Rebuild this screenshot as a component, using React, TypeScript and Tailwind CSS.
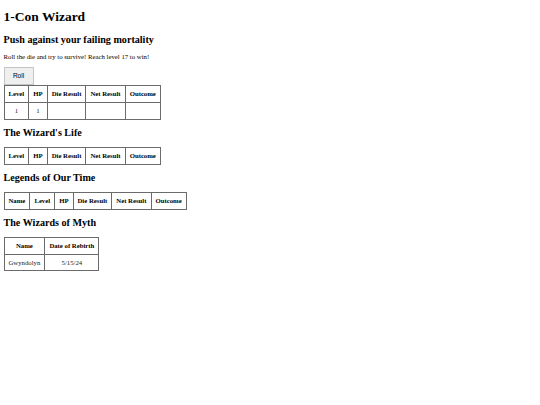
const serif = "font-['Liberation_Serif','Times_New_Roman',serif]";

const th = "border border-[#6b6b6b] px-[4px] py-[4px] text-[6.75px] leading-[8px] font-bold text-black whitespace-nowrap";
const td = "border border-[#6b6b6b] px-[4px] py-[4px] text-[6.75px] leading-[7.5px] text-center text-[#222] whitespace-nowrap";

function Table({ headers, rows }: { headers: string[]; rows: string[][] }) {
  return (
    <table className="border-collapse">
      <thead>
        <tr>
          {headers.map((h) => (
            <th key={h} className={th}>
              {h}
            </th>
          ))}
        </tr>
      </thead>
      <tbody>
        {rows.map((r, i) => (
          <tr key={i}>
            {r.map((c, j) => (
              <td key={j} className={td}>
                {c}
              </td>
            ))}
          </tr>
        ))}
      </tbody>
    </table>
  );
}

const h2 = "text-[10.125px] leading-[11.5px] font-bold my-[7.75px] text-black";

export default function App() {
  const cols = ["Level", "HP", "Die Result", "Net Result", "Outcome"];

  return (
    <div className={`${serif} min-h-[405px] w-[540px] bg-white px-[3.5px] pt-px text-black`}>
      <h1 className="mb-[9px] mt-[8px] text-[13.5px] font-bold leading-[15.5px]">1-Con Wizard</h1>
      <h2 className={h2}>Push against your failing mortality</h2>
      <p className="my-[6.5px] text-[6.75px] leading-[7.8px]">
        Roll the die and try to survive! Reach level 17 to win!
      </p>
      <div className="flex">
        <button className="h-[18px] w-[30px] border border-[#c4c4c4] bg-[#efefef] font-['Liberation_Sans',Arial,sans-serif] text-[6.5px] leading-none text-black">
          Roll
        </button>
      </div>
      <Table headers={cols} rows={[["1", "1", "", "", ""]]} />

      <h2 className={h2}>The Wizard's Life</h2>
      <Table headers={cols} rows={[]} />

      <h2 className={h2}>Legends of Our Time</h2>
      <Table headers={["Name", ...cols]} rows={[]} />

      <h2 className={h2}>The Wizards of Myth</h2>
      <Table headers={["Name", "Date of Rebirth"]} rows={[["Gwyndolyn", "5/15/24"]]} />
    </div>
  );
}
